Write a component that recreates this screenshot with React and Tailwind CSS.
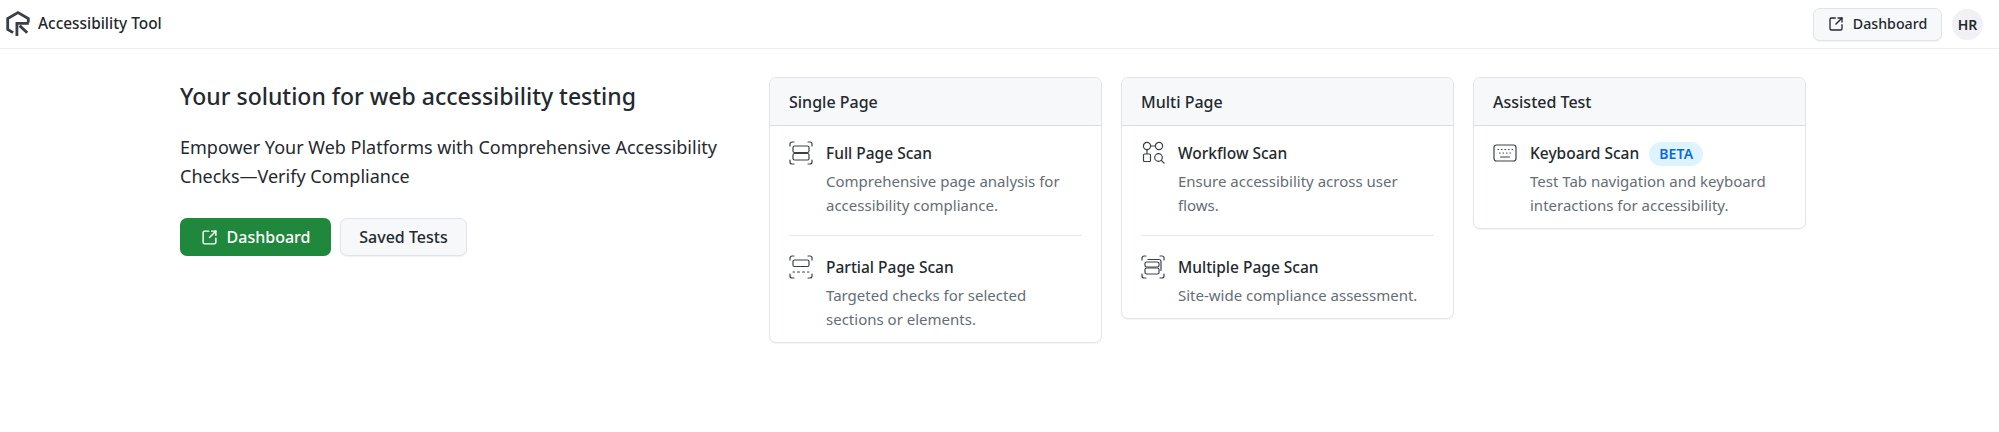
import React from 'react';
import { SquareArrowOutUpRight } from 'lucide-react';

// scan frame corners shared by the page-scan icons
const Corners = () => (
  <g>
    <path d="M1 5V3a2 2 0 0 1 2-2h2" />
    <path d="M19 1h2a2 2 0 0 1 2 2v2" />
    <path d="M1 19v2a2 2 0 0 0 2 2h2" />
    <path d="M19 23h2a2 2 0 0 0 2-2v-2" />
  </g>
);

const IconBase = ({ children }) => (
  <svg viewBox="0 0 24 24" width="24" height="24" fill="none" stroke="#3b4048" strokeWidth="1.2" strokeLinecap="round" strokeLinejoin="round" className="shrink-0 mt-[1px]">
    {children}
  </svg>
);

const FullPageIcon = () => (
  <IconBase>
    <Corners />
    <rect x="4" y="5" width="16" height="6.5" rx="1.5" />
    <rect x="4" y="12.5" width="16" height="6.5" rx="1.5" />
  </IconBase>
);

const PartialPageIcon = () => (
  <IconBase>
    <Corners />
    <rect x="4" y="5" width="16" height="6.5" rx="1.5" />
    <path d="M4 17h1.5M8.5 17h2M13.5 17h2M18.5 17H20" />
  </IconBase>
);

const WorkflowIcon = () => (
  <IconBase>
    <circle cx="6" cy="5" r="3.6" />
    <circle cx="18" cy="5" r="3.6" />
    <path d="M9.6 5h4.8M6 8.6v4" />
    <rect x="2.5" y="13" width="7" height="7.5" rx="1" />
    <circle cx="17.5" cy="16.5" r="3.8" />
    <path d="M20.3 19.3 23 22" />
  </IconBase>
);

const MultiPageIcon = () => (
  <IconBase>
    <Corners />
    <path d="M7 4.5h11a2 2 0 0 1 2 2v9" />
    <rect x="4" y="7" width="14" height="5" rx="1.5" />
    <rect x="4" y="13" width="14" height="6" rx="1.5" />
  </IconBase>
);

const KeyboardIcon = () => (
  <IconBase>
    <rect x="1" y="4" width="22" height="16" rx="2.5" />
    <path d="M5 8.5h.6M8.5 8.5h.6M12 8.5h.6M15.5 8.5h.6M19 8.5h.6M6.5 12h.6M10 12h.6M13.5 12h.6M17 12h.6M7.5 16h9" />
  </IconBase>
);

const Logo = () => (
  <svg viewBox="0 0 24 24" width="26" height="26" fill="none" stroke="#3a3f47" strokeWidth="2.6" strokeLinejoin="miter" className="shrink-0">
    <path d="M7.5 20 2.5 17V7l9.5-5.5L21.5 7v3.5" />
    <path d="M11 23V11.5h11" />
    <path d="M13.5 13.5l7 6.5" />
  </svg>
);

const sections = [
  {
    title: 'Single Page',
    items: [
      { name: 'Full Page Scan', desc: 'Comprehensive page analysis for accessibility compliance.', icon: <FullPageIcon /> },
      { name: 'Partial Page Scan', desc: 'Targeted checks for selected sections or elements.', icon: <PartialPageIcon /> },
    ],
  },
  {
    title: 'Multi Page',
    items: [
      { name: 'Workflow Scan', desc: 'Ensure accessibility across user flows.', icon: <WorkflowIcon /> },
      { name: 'Multiple Page Scan', desc: 'Site-wide compliance assessment.', icon: <MultiPageIcon /> },
    ],
  },
  {
    title: 'Assisted Test',
    items: [
      { name: 'Keyboard Scan', beta: true, desc: 'Test Tab navigation and keyboard interactions for accessibility.', icon: <KeyboardIcon /> },
    ],
  },
];

function ScanCard({ section }) {
  return (
    <div className="w-[333px] self-start rounded-[7px] border border-[#e1e4e8] bg-white shadow-[0_1px_1px_rgba(31,35,40,0.04)] overflow-hidden">
      <div className="h-[48px] flex items-center px-[19px] bg-[#f6f8fa] border-b border-[#d8dee4] text-[16px] font-medium text-[#24292f]">
        {section.title}
      </div>
      <div className="px-[19px]">
        {section.items.map((item, i) => (
          <div key={item.name} className={`flex gap-[13px] ${i > 0 ? 'border-t border-[#e6e8eb] pt-[18px]' : 'pt-[14px]'} ${i < section.items.length - 1 ? 'pb-[18px]' : 'pb-[11px]'}`}>
            {item.icon}
            <div>
              <div className="flex items-center gap-[10px] h-[28px]">
                <span className="text-[15.5px] font-medium text-[#24292f]">{item.name}</span>
                {item.beta && (
                  <span className="rounded-full bg-[#ddf4ff] px-[10px] h-[24px] leading-[23px] text-[14px] font-semibold text-[#0969da] tracking-[0.2px]">BETA</span>
                )}
              </div>
              <p className="mt-[1px] text-[15px] leading-[24px] text-[#656d76]">{item.desc}</p>
            </div>
          </div>
        ))}
      </div>
    </div>
  );
}

export default function App() {
  return (
    <div className="w-[1999px] h-[432px] bg-white overflow-hidden font-['Noto_Sans',sans-serif]">
      <header className="h-[49px] flex items-center justify-between pl-[5px] pr-[16px] border-b border-[#eeeff1]">
        <div className="flex items-center gap-[7px]">
          <Logo />
          <span className="text-[15.4px] font-medium text-[#24292f]">Accessibility Tool</span>
        </div>
        <div className="flex items-center gap-[10px]">
          <button className="h-[33px] w-[129px] flex items-center justify-center gap-[9px] rounded-[7px] border border-[#e1e4e8] bg-[#f6f8fa] shadow-[0_1px_1px_rgba(31,35,40,0.06)] text-[14.2px] font-medium text-[#24292f]">
            <SquareArrowOutUpRight size={16} strokeWidth={2} />
            Dashboard
          </button>
          <div className="w-[31px] h-[31px] rounded-full bg-[#eff1f4] flex items-center justify-center text-[14px] font-semibold text-[#24292f]">HR</div>
        </div>
      </header>
      <main className="flex pt-[28px] pl-[180px]">
        <div className="w-[589px] pr-[40px]">
          <h1 className="mt-[3px] text-[23px] leading-[32px] font-medium text-[#24292f] whitespace-nowrap">Your solution for web accessibility testing</h1>
          <p className="mt-[21px] text-[18px] leading-[29px] text-[#24292f]">Empower Your Web Platforms with Comprehensive Accessibility Checks—Verify Compliance</p>
          <div className="mt-[27px] flex gap-[9px]">
            <button className="h-[38px] w-[151px] flex items-center justify-center gap-[9px] rounded-[7px] bg-[#1f883d] text-[16px] font-medium text-white">
              <SquareArrowOutUpRight size={17} strokeWidth={2} />
              Dashboard
            </button>
            <button className="h-[38px] w-[127px] rounded-[7px] border border-[#e1e4e8] bg-[#f6f8fa] shadow-[0_1px_1px_rgba(31,35,40,0.06)] text-[16px] font-medium text-[#24292f]">Saved Tests</button>
          </div>
        </div>
        <div className="flex gap-[19px]">
          {sections.map((s) => (
            <ScanCard key={s.title} section={s} />
          ))}
        </div>
      </main>
    </div>
  );
}
